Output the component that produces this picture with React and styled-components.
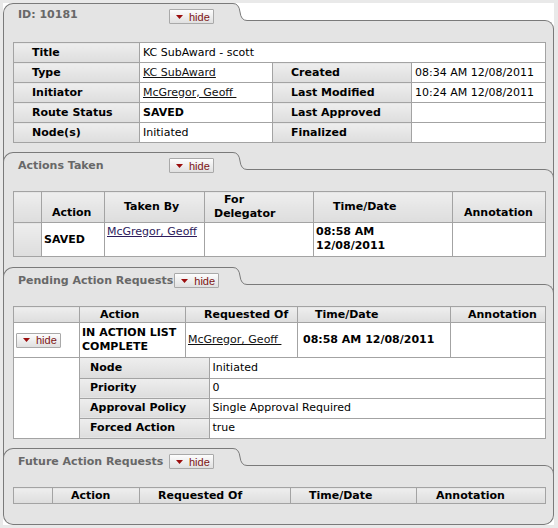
import React from "react";
import styled, { createGlobalStyle, css } from "styled-components";

const GlobalStyle = createGlobalStyle`
  html, body {
    margin: 0;
    padding: 0;
    background: #e9e9e9;
  }
  body {
    font-family: "DejaVu Sans", Verdana, sans-serif;
    font-size: 11px;
    color: #000;
  }
`;

const LINE = "#7a7a7a";
const PANEL = "#e4e4e4";
const GRID = "#a3a3a3";

const Page = styled.div`
  margin: 3px 4px 4px 3px;
  background: #fff;
`;

const TabRow = styled.div`
  display: flex;
  height: 26px;
  ${(p) =>
    !p.$first &&
    css`
      background: ${PANEL};
      border-left: 1px solid ${LINE};
      border-right: 1px solid ${LINE};
    `}
`;

const Tab = styled.div`
  box-sizing: border-box;
  width: 230px;
  flex-shrink: 0;
  display: flex;
  align-items: flex-start;
  padding: 6px 0 0 14px;
  background: ${PANEL};
  border-top: 1px solid ${LINE};
  border-left: 1px solid ${LINE};
  border-top-left-radius: 10px;
  margin-left: ${(p) => (p.$first ? 0 : -1)}px;
`;

const TabTitle = styled.span`
  min-width: 150px;
  padding-right: 1px;
  line-height: 13px;
  font-weight: bold;
  color: #686868;
  white-space: nowrap;
  margin-top: ${(p) => (p.$first ? -2 : 0)}px;
`;

const Rest = styled.div`
  flex: 1;
  margin-top: 17px;
  background: ${PANEL};
  border-top: 1px solid ${LINE};
  border-right: 1px solid ${LINE};
  border-top-right-radius: 10px;
  margin-right: ${(p) => (p.$first ? 0 : -1)}px;
`;

const Curve = styled.svg`
  flex-shrink: 0;
  display: block;
`;

const Body = styled.div`
  background: ${PANEL};
  border-left: 1px solid ${LINE};
  border-right: 1px solid ${LINE};
  padding: 13px 7px ${(p) => p.$pb}px 9px;
  ${(p) =>
    p.$last &&
    css`
      border-bottom: 1px solid ${LINE};
      border-radius: 0 0 10px 10px;
    `}
`;

const HideBtn = styled.button`
  box-sizing: border-box;
  display: inline-flex;
  align-items: center;
  gap: 6px;
  width: 45px;
  height: 15px;
  margin-top: ${(p) => (p.$inTab ? -1 : 0)}px;
  padding: 0 0 0 6px;
  border: 1px solid #a9a9a9;
  border-radius: 1px;
  background: linear-gradient(#fdfdfd, #e0e0e0);
  font-family: "Liberation Sans", Arial, sans-serif;
  font-size: 11px;
  color: #7d1414;
  cursor: pointer;
`;

const Grid = styled.table`
  width: 100%;
  table-layout: fixed;
  border-collapse: collapse;
  background: #fff;
`;

const Inner = styled(Grid)`
  border: hidden;
`;

const Col = styled.col`
  width: ${(p) => p.$w}px;
`;

const Row = styled.tr`
  height: ${(p) => p.$h}px;
`;

const Th = styled.th`
  border: 1px solid ${GRID};
  background: linear-gradient(#eeeeee, #dddddd);
  font-weight: bold;
  text-align: left;
  line-height: 14px;
  padding: 0 2px ${(p) => (p.$va === "bottom" ? 2 : 0)}px ${(p) => p.$pl ?? 18}px;
  vertical-align: ${(p) => p.$va || "middle"};
  text-indent: ${(p) => p.$indent || 0}px;
  white-space: nowrap;
`;

const Td = styled.td`
  border: 1px solid ${GRID};
  background: #fff;
  line-height: 14px;
  padding: ${(p) => (p.$va === "top" ? 2 : 0)}px 2px 0 ${(p) => p.$pl ?? 3}px;
  vertical-align: ${(p) => p.$va || "middle"};
  font-weight: ${(p) => (p.$bold ? "bold" : "normal")};
  white-space: nowrap;
`;

const Nest = styled.td`
  border: 1px solid ${GRID};
  padding: 0;
`;

const Link = styled.a`
  color: ${(p) => p.$c || "#111"};
  text-decoration: underline;
  cursor: pointer;
`;

const Hide = ({ inTab }) => (
  <HideBtn type="button" $inTab={inTab}>
    <svg width="7" height="4" viewBox="0 0 7 4">
      <polygon points="0,0 7,0 3.5,4" fill="#9b0d0d" />
    </svg>
    hide
  </HideBtn>
);

const Section = ({ title, first, last, pb = 9, children }) => (
  <div>
    <TabRow $first={first}>
      <Tab $first={first}>
        <TabTitle $first={first}>{title}</TabTitle>
        <Hide inTab />
      </Tab>
      <Curve width="14" height="26" viewBox="0 0 14 26">
        <path d="M0 0.5 Q6 0.5 7 9 Q8 17.5 14 17.5 L14 26 L0 26 Z" fill={PANEL} />
        <path d="M0 0.5 Q6 0.5 7 9 Q8 17.5 14 17.5" fill="none" stroke={LINE} strokeWidth="1" />
      </Curve>
      <Rest $first={first} />
    </TabRow>
    <Body $pb={pb} $last={last}>
      {children}
    </Body>
  </div>
);

const DocumentInfo = () => (
  <Grid>
    <colgroup>
      <Col $w={126} />
      <Col $w={133} />
      <Col $w={139} />
      <Col $w={134} />
    </colgroup>
    <tbody>
      <Row $h={20}>
        <Th>Title</Th>
        <Td colSpan={3}>KC SubAward - scott</Td>
      </Row>
      <Row $h={20}>
        <Th>Type</Th>
        <Td>
          <Link>KC SubAward</Link>
        </Td>
        <Th>Created</Th>
        <Td>08:34 AM 12/08/2011</Td>
      </Row>
      <Row $h={20}>
        <Th>Initiator</Th>
        <Td>
          <Link>McGregor, Geoff&nbsp;</Link>
        </Td>
        <Th>Last Modified</Th>
        <Td>10:24 AM 12/08/2011</Td>
      </Row>
      <Row $h={20}>
        <Th>Route Status</Th>
        <Td $bold>SAVED</Td>
        <Th>Last Approved</Th>
        <Td />
      </Row>
      <Row $h={20}>
        <Th>Node(s)</Th>
        <Td>Initiated</Td>
        <Th>Finalized</Th>
        <Td />
      </Row>
    </tbody>
  </Grid>
);

const ActionsTaken = () => (
  <Grid>
    <colgroup>
      <Col $w={28} />
      <Col $w={63} />
      <Col $w={100} />
      <Col $w={109} />
      <Col $w={139} />
      <Col $w={93} />
    </colgroup>
    <tbody>
      <Row $h={31}>
        <Th />
        <Th $pl={10} $va="bottom">Action</Th>
        <Th $pl={19}>Taken By</Th>
        <Th $pl={9} $indent={10}>
          For
          <br />
          Delegator
        </Th>
        <Th $pl={19}>Time/Date</Th>
        <Th $pl={11} $va="bottom">Annotation</Th>
      </Row>
      <Row $h={34}>
        <Th />
        <Td $pl={2} $bold>SAVED</Td>
        <Td $pl={2} $va="top">
          <Link $c="#2d1b5c">McGregor, Geoff</Link>
        </Td>
        <Td />
        <Td $pl={2} $va="top" $bold>
          08:58 AM
          <br />
          12/08/2011
        </Td>
        <Td />
      </Row>
    </tbody>
  </Grid>
);

const details = [
  ["Node", "Initiated"],
  ["Priority", "0"],
  ["Approval Policy", "Single Approval Required"],
  ["Forced Action", "true"],
];

const PendingRequests = () => (
  <Grid>
    <colgroup>
      <Col $w={66} />
      <Col $w={106} />
      <Col $w={112} />
      <Col $w={153} />
      <Col $w={95} />
    </colgroup>
    <tbody>
      <Row $h={16}>
        <Th />
        <Th $pl={20}>Action</Th>
        <Th $pl={18}>Requested Of</Th>
        <Th $pl={17}>Time/Date</Th>
        <Th $pl={17}>Annotation</Th>
      </Row>
      <Row $h={35}>
        <Td $pl={2}>
          <Hide />
        </Td>
        <Td $pl={2} $bold>
          IN ACTION LIST
          <br />
          COMPLETE
        </Td>
        <Td $pl={2}>
          <Link>McGregor, Geoff&nbsp;</Link>
        </Td>
        <Td $pl={5} $bold>08:58 AM 12/08/2011</Td>
        <Td />
      </Row>
      <tr>
        <Td />
        <Nest colSpan={4}>
          <Inner>
            <colgroup>
              <Col $w={129} />
              <Col $w={337} />
            </colgroup>
            <tbody>
              {details.map(([label, value]) => (
                <Row $h={20} key={label}>
                  <Th $pl={10}>{label}</Th>
                  <Td>{value}</Td>
                </Row>
              ))}
            </tbody>
          </Inner>
        </Nest>
      </tr>
    </tbody>
  </Grid>
);

const FutureRequests = () => (
  <Grid>
    <colgroup>
      <Col $w={39} />
      <Col $w={87} />
      <Col $w={151} />
      <Col $w={126} />
      <Col $w={129} />
    </colgroup>
    <tbody>
      <Row $h={16}>
        <Th />
        <Th>Action</Th>
        <Th>Requested Of</Th>
        <Th>Time/Date</Th>
        <Th $pl={19}>Annotation</Th>
      </Row>
    </tbody>
  </Grid>
);

export default function App() {
  return (
    <>
      <GlobalStyle />
      <Page>
        <Section title="ID: 10181" first>
          <DocumentInfo />
        </Section>
        <Section title="Actions Taken" pb={10}>
          <ActionsTaken />
        </Section>
        <Section title="Pending Action Requests">
          <PendingRequests />
        </Section>
        <Section title="Future Action Requests" last pb={20}>
          <FutureRequests />
        </Section>
      </Page>
    </>
  );
}
